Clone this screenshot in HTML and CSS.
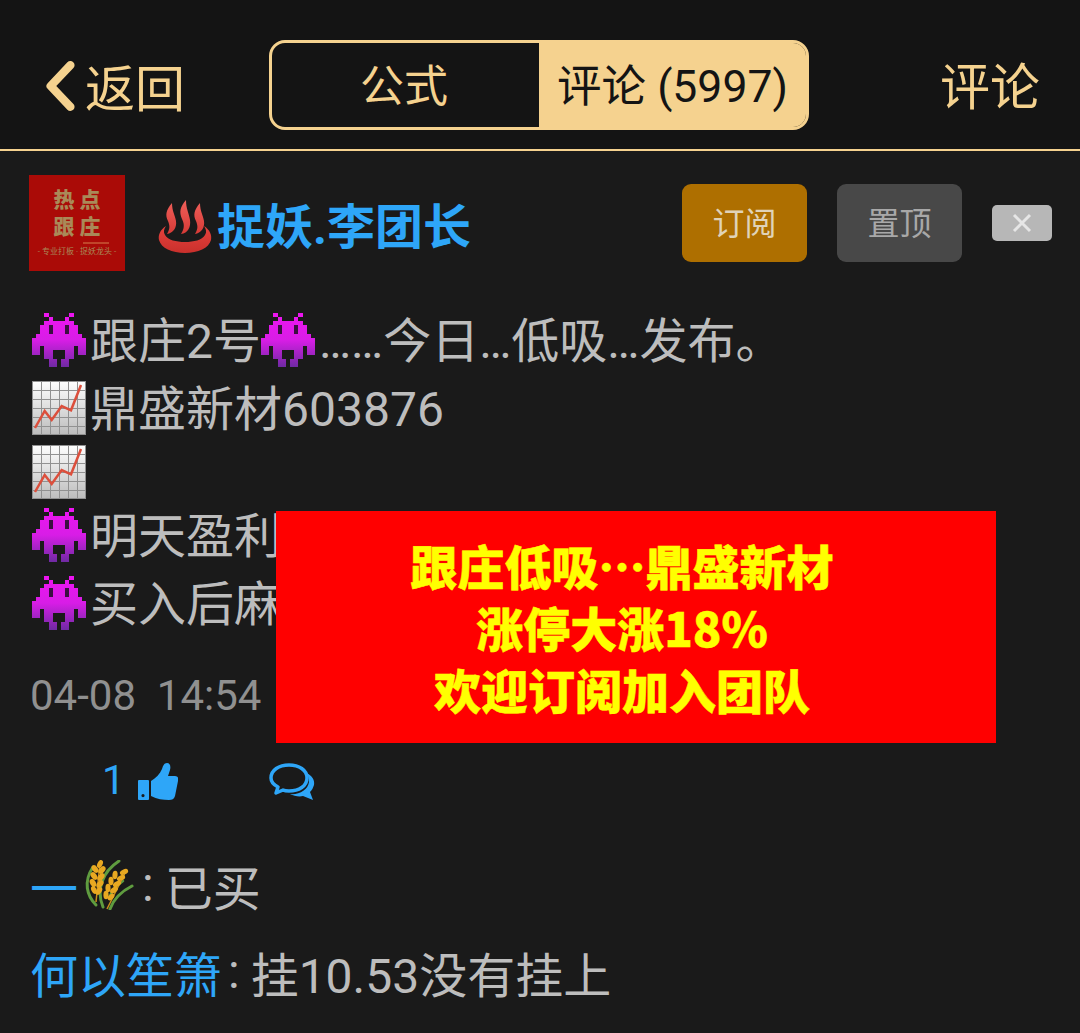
FILE: index.html
```html
<!DOCTYPE html>
<html lang="zh-CN">
<head>
<meta charset="UTF-8">
<meta name="viewport" content="width=device-width, initial-scale=1.0">
<title>评论</title>
<link rel="stylesheet" href="styles.css">
</head>
<body>
<svg class="defs" width="0" height="0" aria-hidden="true">
    <defs>
        <linearGradient id="invaderFill" x1="0" y1="0" x2="0" y2="1">
            <stop offset="0" stop-color="#ee14f2"/>
            <stop offset="0.5" stop-color="#d81de6"/>
            <stop offset="1" stop-color="#6f2aa3"/>
        </linearGradient>
        <linearGradient id="chartFill" x1="0" y1="0" x2="0" y2="1">
            <stop offset="0" stop-color="#ffffff"/>
            <stop offset="1" stop-color="#bcbcbc"/>
        </linearGradient>
        <linearGradient id="steamFill" x1="0" y1="0" x2="0" y2="1">
            <stop offset="0" stop-color="#f0605a"/>
            <stop offset="1" stop-color="#d63a36"/>
        </linearGradient>
        <linearGradient id="bowlFill" x1="0" y1="0" x2="0" y2="1">
            <stop offset="0" stop-color="#e5423d"/>
            <stop offset="1" stop-color="#c9302c"/>
        </linearGradient>
        <symbol id="invader" viewBox="0 0 13 13">
            <g fill="url(#invaderFill)" shape-rendering="crispEdges">
                <path d="M3 0h1v1h-1zM9 0h1v1h-1zM4 1h1v1h-1zM8 1h1v1h-1zM3 2h7v1h-7zM2 3h9v2h-9zM1 5h11v1h-11zM0 6h13v2h-13zM0 8h2v2h-2zM11 8h2v2h-2zM3 8h7v1h-7zM3 9h2v2h-2zM8 9h2v2h-2zM4 11h2v2h-2zM7 11h2v2h-2z"/>
            </g>
            <path fill="#3a1040" shape-rendering="crispEdges" d="M4 3h1v2h-1zM8 3h1v2h-1z"/>
        </symbol>
        <symbol id="chart" viewBox="0 0 54 54">
            <rect width="54" height="54" fill="url(#chartFill)"/>
            <path d="M.5 0v54M9.500 0v54M18.500 0v54M27.500 0v54M36.500 0v54M45.500 0v54M53.500 0v54M0 .5h54M0 9.500h54M0 18.500h54M0 27.500h54M0 36.500h54M0 45.500h54M0 53.500h54" stroke="#919191" stroke-width="1" fill="none"/>
            <path d="M3 47L12.700 30 19.700 39 29.700 25 39 29.300 49 4" stroke="#dc4f3c" stroke-width="2.500" fill="none"/>
        </symbol>
    </defs>
</svg>

<header class="topbar">
    <a class="back">
        <svg class="back-arrow" viewBox="0 0 30 50"><path d="M25 5L6 25l19 20" fill="none" stroke="#f5d28f" stroke-width="8" stroke-linecap="round" stroke-linejoin="round"/></svg>
        <span>返回</span>
    </a>
    <div class="tabs">
        <div class="tab">公式</div>
        <div class="tab tab-active">评论 (5997)</div>
    </div>
    <a class="top-action">评论</a>
</header>

<main class="post">
    <div class="post-head">
        <div class="avatar">
            <div class="avatar-big">热点</div>
            <div class="avatar-big">跟庄</div>
            <div class="avatar-mark"></div>
            <div class="avatar-small">- 专业打板 · 捉妖龙头 -</div>
        </div>
        <svg class="name-icon" viewBox="0 0 54 53">
            <path fill="url(#steamFill)" d="M14 3c-6 7-7 12-4 18 2 5 2 8-1 13 6-1 10-6 9-13-1-6-4-10-4-18zM28 0c-6 7-7 12-4 19 3 6 2 10-1 15 7-1 10-7 9-14-1-7-4-11-4-20zM42 3c-6 7-7 12-4 18 2 5 2 8-1 13 6-1 10-6 9-13-1-6-4-10-4-18z"/>
            <path fill="url(#bowlFill)" d="M8 26C2 30 0 35 1 40c2 8 13 13 26 13s24-5 26-13c1-5-1-10-7-14 2 3 3 6 1 9-3 5-11 7-20 7S10 40 7 35c-2-3-1-6 1-9z"/>
        </svg>
        <div class="name">捉妖.李团长</div>
        <div class="head-buttons">
            <div class="btn btn-sub">订阅</div>
            <div class="btn btn-top">置顶</div>
            <div class="btn-close">
                <svg viewBox="0 0 20 20"><path d="M2 2l16 16M18 2L2 18" stroke="#e6e6e6" stroke-width="3"/></svg>
            </div>
        </div>
    </div>

    <div class="post-body">
        <div class="line"><svg class="emoji"><use href="#invader"/></svg><span>跟庄2号</span><svg class="emoji"><use href="#invader"/></svg><span>……今日…低吸…发布。</span></div>
        <div class="line"><svg class="emoji"><use href="#chart"/></svg><span>鼎盛新材603876</span></div>
        <div class="line line-short"><svg class="emoji"><use href="#chart"/></svg></div>
        <div class="line"><svg class="emoji"><use href="#invader"/></svg><span>明天盈利</span></div>
        <div class="line"><svg class="emoji"><use href="#invader"/></svg><span>买入后麻</span></div>
    </div>

    <div class="post-date">04-08&nbsp; 14:54</div>

    <div class="post-actions">
        <span class="like-count">1</span>
        <svg class="thumb" viewBox="0 0 40 38">
            <path fill="#2ea6f8" fill-rule="evenodd" d="M1 17h9a1 1 0 0 1 1 1v18a1 1 0 0 1-1 1H1a1 1 0 0 1-1-1V18a1 1 0 0 1 1-1zm4 14a1.600 1.600 0 1 0 0 3.200a1.600 1.600 0 0 0 0-3.200z"/>
            <path fill="#2ea6f8" d="M13 18c5-3 9-7 11-12 1-3 2-6 5-6 3 0 4 3 3 7l-2 6h7c3 0 4 3 3 5l-3 15c-1 3-3 4-6 4-6 0-12-1-18-4z"/>
        </svg>
        <svg class="bubbles" viewBox="0 0 46 38">
            <path fill="#2ea6f8" d="M38 10c5 3 8 7 7 12-1 3-2 5-4 7l3 8-10-4c-4 1-9 0-13-2 9 1 18-4 19-12 0-3-1-6-2-9z"/>
            <path fill="none" stroke="#2ea6f8" stroke-width="3.500" stroke-linejoin="round" d="M20 2c10 0 18 5 18 13s-8 13-18 13c-2 0-4 0-6-1l-7 3 2-6c-4-2-7-5-7-9C2 7 10 2 20 2z"/>
        </svg>
    </div>

    <div class="comment">
        <span class="comment-user">一</span>
        <svg class="emoji emoji-rice" viewBox="0 0 50 50">
            <g fill="none" stroke="#5f9c3f" stroke-linecap="round">
                <path stroke-width="3" d="M12 45C3 36-1 22 9 7"/>
                <path stroke-width="3" d="M19 47C12 30 18 12 35 1"/>
                <path stroke-width="3" d="M26 49C30 38 38 31 48 26"/>
                <path stroke-width="2.500" d="M25 38C28 30 32 26 39 21"/>
            </g>
            <g fill="none" stroke="#c98f1c" stroke-width="1.500">
                <path d="M16 3L12 42"/>
                <path d="M42 11L23 49"/>
            </g>
            <g fill="#e8a821">
                <ellipse cx="16" cy="4" rx="2.600" ry="4.200" transform="rotate(25 16 4)"/>
                <ellipse cx="11" cy="9" rx="2.800" ry="4.400" transform="rotate(-35 11 9)"/>
                <ellipse cx="18" cy="10" rx="2.800" ry="4.400" transform="rotate(40 18 10)"/>
                <ellipse cx="10" cy="16" rx="2.800" ry="4.400" transform="rotate(-35 10 16)"/>
                <ellipse cx="17" cy="17" rx="2.800" ry="4.400" transform="rotate(40 17 17)"/>
                <ellipse cx="9" cy="23" rx="2.800" ry="4.400" transform="rotate(-30 9 23)"/>
                <ellipse cx="16" cy="24" rx="2.800" ry="4.400" transform="rotate(40 16 24)"/>
                <ellipse cx="10" cy="30" rx="2.600" ry="4.200" transform="rotate(-25 10 30)"/>
                <ellipse cx="15" cy="31" rx="2.600" ry="4.200" transform="rotate(35 15 31)"/>
                <ellipse cx="40" cy="12" rx="2.600" ry="4.400" transform="rotate(65 40 12)"/>
                <ellipse cx="31" cy="15" rx="2.600" ry="4.200" transform="rotate(5 31 15)"/>
                <ellipse cx="37" cy="18" rx="2.600" ry="4.400" transform="rotate(65 37 18)"/>
                <ellipse cx="27" cy="21" rx="2.600" ry="4.200" transform="rotate(0 27 21)"/>
                <ellipse cx="33" cy="24" rx="2.600" ry="4.400" transform="rotate(60 33 24)"/>
                <ellipse cx="24" cy="28" rx="2.600" ry="4.200" transform="rotate(0 24 28)"/>
                <ellipse cx="30" cy="30" rx="2.600" ry="4.400" transform="rotate(55 30 30)"/>
                <ellipse cx="22" cy="35" rx="2.600" ry="4.200" transform="rotate(0 22 35)"/>
                <ellipse cx="27" cy="37" rx="2.500" ry="4" transform="rotate(45 27 37)"/>
            </g>
        </svg>
        <span class="comment-colon">:</span>
        <span class="comment-text">已买</span>
    </div>
    <div class="comment">
        <span class="comment-user">何以笙箫</span>
        <span class="comment-colon">:</span>
        <span class="comment-text">挂10.53没有挂上</span>
    </div>
</main>

<div class="promo">
    <div>跟庄低吸…鼎盛新材</div>
    <div>涨停大涨18%</div>
    <div>欢迎订阅加入团队</div>
</div>
</body>
</html>
```

FILE: styles.css
```css
html, body {
    margin: 0;
    padding: 0;
    height: 1033px;
    overflow: hidden;
}
body {
    position: relative;
    background-color: #1a1a1a;
    color: #bdbdbd;
    font-family: Roboto, "Noto Sans CJK SC", sans-serif;
}
.defs {
    position: absolute;
}

/* top bar */
.topbar {
    box-sizing: border-box;
    height: 151px;
    padding: 40px 40px 19px 43px;
    background-color: #141414;
    border-bottom: 2px solid #f5d28f;
    display: flex;
    align-items: center;
    color: #f5d28f;
}
.back {
    display: flex;
    align-items: center;
    gap: 8px;
    font-size: 50px;
    width: 226px;
}
.back-arrow {
    width: 34px;
    height: 52px;
    margin-top: 2px;
}
.tabs {
    box-sizing: border-box;
    width: 540px;
    height: 90px;
    border: 3px solid #f5d28f;
    border-radius: 16px;
    display: flex;
    overflow: hidden;
}
.tab {
    width: 267px;
    padding-right: 3px;
    box-sizing: border-box;
    text-align: center;
    font-size: 44px;
    line-height: 88px;
}
.tab-active {
    flex: 1;
    padding-right: 0;
    font-size: 44.500px;
    background-color: #f5d28f;
    color: #141414;
}
.top-action {
    margin-left: auto;
    margin-top: -4px;
    font-size: 50px;
}

/* post head */
.post {
    padding-top: 24px;
}
.post-head {
    display: flex;
    align-items: center;
    height: 96px;
    padding: 0 28px 0 29px;
}
.avatar {
    box-sizing: border-box;
    width: 96px;
    height: 96px;
    padding-top: 12px;
    background-color: #aa0b07;
    color: #a98a58;
    text-align: center;
}
.avatar-big {
    font-size: 21px;
    font-weight: 900;
    line-height: 27px;
    letter-spacing: 5px;
    padding-left: 5px;
}
.avatar-mark {
    width: 26px;
    height: 2px;
    margin: 1px 0 2px 54px;
    background-color: #c0452a;
}
.avatar-small {
    font-size: 8px;
    line-height: 12px;
    white-space: nowrap;
}
.name-icon {
    width: 54px;
    height: 53px;
    margin-left: 33px;
    margin-top: 6px;
}
.name {
    margin-left: 5px;
    font-size: 48px;
    font-weight: 700;
    color: #2ea6f8;
}
.head-buttons {
    margin-left: auto;
    display: flex;
    align-items: center;
}
.btn {
    width: 125px;
    height: 78px;
    border-radius: 9px;
    font-size: 32px;
    line-height: 80px;
    text-align: center;
}
.btn-sub {
    background-color: #ae6f00;
    color: #e0d3b8;
}
.btn-top {
    margin-left: 30px;
    background-color: #484848;
    color: #a8a8a8;
}
.btn-close {
    margin-left: 30px;
    width: 60px;
    height: 36px;
    border-radius: 5px;
    background-color: #b7b7b7;
    display: flex;
    align-items: center;
    justify-content: center;
}
.btn-close svg {
    width: 20px;
    height: 20px;
}

/* post body */
.post-body {
    margin-top: 35px;
    padding-left: 32px;
    font-size: 48px;
}
.line {
    height: 68px;
    display: flex;
    align-items: center;
    white-space: nowrap;
}
.line span {
    margin-bottom: 6px;
}
.line-short {
    height: 59px;
}
.emoji {
    width: 54px;
    height: 54px;
    margin-right: 4px;
    flex-shrink: 0;
}
.post-date {
    margin-top: 28px;
    padding-left: 30px;
    height: 56px;
    line-height: 61px;
    font-size: 42px;
    color: #909090;
}
.post-actions {
    margin-top: 34px;
    padding-left: 102px;
    height: 50px;
    display: flex;
    align-items: center;
    color: #2ea6f8;
    font-size: 41px;
}
.thumb {
    width: 40px;
    height: 38px;
    margin: 4px 0 0 13px;
}
.bubbles {
    width: 46px;
    height: 38px;
    margin: 3px 0 0 91px;
}

/* comments */
.comment {
    padding-left: 30px;
    height: 87px;
    display: flex;
    align-items: center;
    font-size: 48px;
    white-space: nowrap;
}
.post-actions + .comment {
    margin-top: 36px;
}
.comment-user {
    color: #2ea6f8;
}
.comment-colon {
    margin: 0 11px 0 6px;
}
.emoji-rice {
    width: 50px;
    height: 50px;
    margin: 0 2px 0 6px;
}

/* banner over the post */
.promo {
    position: absolute;
    left: 276px;
    top: 511px;
    box-sizing: border-box;
    width: 720px;
    height: 232px;
    padding: 23px 28px 0 0;
    background-color: #ff0000;
    color: #ffff00;
    font-family: "Noto Sans CJK SC", sans-serif;
    font-size: 47px;
    font-weight: 900;
    line-height: 62px;
    text-align: center;
    -webkit-text-stroke: 0.5px #ffff00;
}
```
